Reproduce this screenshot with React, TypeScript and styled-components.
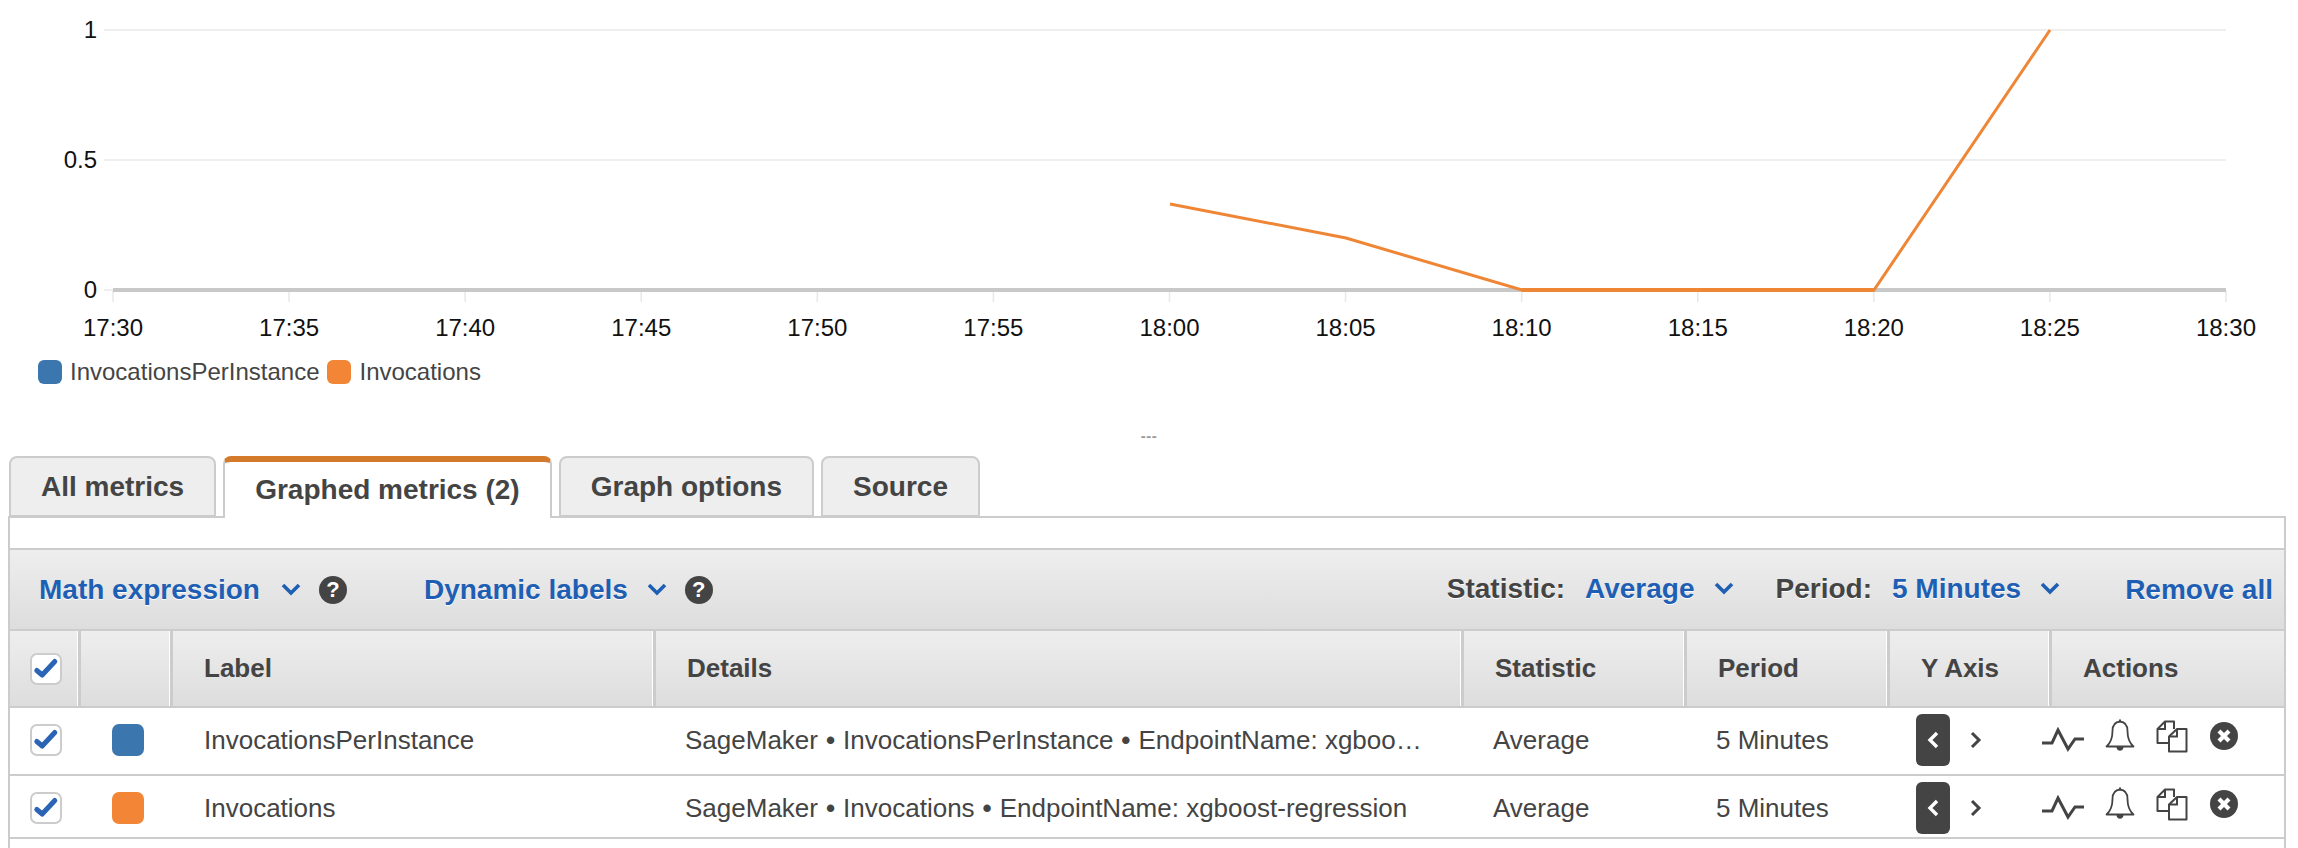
import React from 'react';
import styled, { createGlobalStyle } from 'styled-components';

const GlobalStyle = createGlobalStyle`
  html, body {
    margin: 0;
    padding: 0;
    background: #fff;
  }
  body {
    font-family: "Liberation Sans", Arial, sans-serif;
    color: #444;
    overflow: hidden;
  }
`;

const Page = styled.div`
  width: 2298px;
  height: 848px;
  display: flex;
  flex-direction: column;
  overflow: hidden;
`;

const ChartSvg = styled.svg`
  display: block;
  flex: none;
`;

const AxisLabel = styled.text`
  font-family: "Liberation Sans", Arial, sans-serif;
  font-size: 24px;
  fill: #111;
`;

const Legend = styled.div`
  display: flex;
  align-items: center;
  height: 24px;
  padding-left: 38px;
  margin-top: 10px;
  flex: none;
`;

const LegendItem = styled.div`
  display: flex;
  align-items: center;
  gap: 8px;
  margin-right: 8px;
  font-size: 24px;
  line-height: 24px;
  color: #444;
`;

const LegendSwatch = styled.span<{ $color: string }>`
  width: 24px;
  height: 24px;
  border-radius: 6px;
  background: ${({ $color }) => $color};
`;

const Divider = styled.div`
  height: 72px;
  flex: none;
  display: flex;
  align-items: center;
  justify-content: center;
  font-size: 15px;
  font-weight: 700;
  letter-spacing: 0.5px;
  color: #999;
  padding-top: 30px;
  box-sizing: border-box;
`;

const Tabs = styled.div`
  display: flex;
  gap: 7px;
  height: 62px;
  padding-left: 9px;
  flex: none;
  position: relative;
  z-index: 1;
`;

const Tab = styled.div<{ $active?: boolean }>`
  box-sizing: border-box;
  height: ${({ $active }) => ($active ? '62px' : '61px')};
  padding: 0 30px;
  display: flex;
  align-items: center;
  font-size: 28px;
  font-weight: 700;
  color: #444;
  background: ${({ $active }) => ($active ? '#fff' : '#eee')};
  border: 2px solid #ccc;
  border-top: ${({ $active }) => ($active ? '6px solid #d37a2b' : '2px solid #ccc')};
  border-bottom: ${({ $active }) => ($active ? 'none' : '2px solid #ccc')};
  border-radius: 8px 8px 0 0;
`;

const Panel = styled.div`
  flex: 1;
  margin: -2px 12px 0 8px;
  border: 2px solid #ccc;
  border-bottom: none;
  display: flex;
  flex-direction: column;
`;

const TopStrip = styled.div`
  height: 30px;
  flex: none;
`;

const Toolbar = styled.div`
  height: 79px;
  flex: none;
  display: flex;
  align-items: center;
  padding: 0 11px 0 29px;
  background: linear-gradient(#eee, #ddd);
  border-top: 2px solid #ccc;
  border-bottom: 2px solid #ccc;
  font-size: 28px;
  font-weight: 700;
  text-shadow: 0 1px 0 #fff;
`;

const MenuLink = styled.span`
  color: #1f5fb3;
`;

const ToolbarLabel = styled.span`
  color: #444;
`;

const Chevron = styled.svg<{ $gap?: number }>`
  margin-left: ${({ $gap }) => $gap ?? 19}px;
  flex: none;
`;

const HelpIcon = styled.span`
  width: 28px;
  height: 28px;
  margin-left: 18px;
  border-radius: 50%;
  background: #444;
  color: #fff;
  font-size: 22px;
  line-height: 28px;
  text-align: center;
  text-shadow: none;
  flex: none;
`;

const LeftGroup = styled.div`
  display: flex;
  align-items: center;
  margin-right: 77px;
`;

const RightGroup = styled.div<{ $gap: number }>`
  display: flex;
  align-items: center;
  margin-right: ${({ $gap }) => $gap}px;
  transform: translateY(-1px);
`;

const Spacer = styled.div`
  flex: 1;
`;

const columns = '71px 92px 483px 808px 223px 203px 162px 230px';

const HeaderRow = styled.div`
  display: grid;
  grid-template-columns: ${columns};
  height: 75px;
  flex: none;
  background: linear-gradient(#eee, #ddd);
  border-bottom: 2px solid #ccc;
`;

const HeaderCell = styled.div<{ $plain?: boolean }>`
  box-sizing: border-box;
  display: flex;
  align-items: center;
  padding-left: ${({ $plain }) => ($plain ? 20 : 31)}px;
  border-right: 3px solid #ccc;
  box-shadow: inset -1px 0 0 #fff;
  font-size: 26px;
  font-weight: 700;
  color: #444;
  &:last-child {
    border-right: none;
    box-shadow: none;
  }
`;

const Row = styled.div<{ $height: number }>`
  display: grid;
  grid-template-columns: ${columns};
  height: ${({ $height }) => $height}px;
  flex: none;
  border-bottom: 2px solid #ccc;
  font-size: 26px;
  color: #444;
`;

const Cell = styled.div`
  box-sizing: border-box;
  padding: 16px 30px 0 29px;
  line-height: 32px;
  white-space: nowrap;
  overflow: hidden;
  text-overflow: ellipsis;
`;

const CheckCell = styled.div`
  padding: 16px 0 0 20px;
`;

const SwatchCell = styled.div`
  padding: 16px 0 0 31px;
`;

const Swatch = styled.div<{ $color: string }>`
  width: 32px;
  height: 32px;
  border-radius: 7px;
  background: ${({ $color }) => $color};
`;

const Box = styled.div`
  box-sizing: border-box;
  width: 32px;
  height: 32px;
  background: #fff;
  border: 2px solid #ccc;
  border-radius: 7px;
  display: flex;
  align-items: center;
  justify-content: center;
`;

const Bullet = styled.span`
  font-weight: 700;
  margin: 0 8px;
`;

const AxisCell = styled.div`
  display: flex;
  align-items: flex-start;
  padding: 6px 0 0 26px;
`;

const AxisActive = styled.div`
  width: 34px;
  height: 52px;
  border-radius: 6px;
  background: #444;
  display: flex;
  align-items: center;
  justify-content: center;
`;

const AxisOther = styled.div`
  width: 40px;
  height: 52px;
  margin-left: 6px;
  display: flex;
  align-items: center;
  justify-content: center;
`;

const ActionCell = styled.div`
  display: flex;
  align-items: flex-start;
  margin-left: -10px;
  padding-top: 19px;
`;

const ActionIcon = styled.svg<{ $left: number }>`
  display: block;
  flex: none;
  margin-left: ${({ $left }) => $left}px;
`;

const ticks = ['17:30', '17:35', '17:40', '17:45', '17:50', '17:55', '18:00', '18:05', '18:10', '18:15', '18:20', '18:25', '18:30'];
const tickX = (i: number) => 113 + i * 176.08;

const Chart = () => (
  <ChartSvg width={2298} height={350}>
    {[30, 160].map((y) => (
      <line key={y} x1={104} x2={2226} y1={y} y2={y} stroke="#eee" strokeWidth={2} />
    ))}
    <line x1={104} x2={113} y1={290} y2={290} stroke="#eee" strokeWidth={2} />
    {ticks.map((t, i) => (
      <line key={t} x1={tickX(i)} x2={tickX(i)} y1={290} y2={302} stroke="#e8e8e8" strokeWidth={1.5} />
    ))}
    <line x1={113} x2={2226} y1={290} y2={290} stroke="#c8c8c8" strokeWidth={4} />
    <polyline
      points="1170,204 1346,238 1522,290 1874,290 2050,30"
      fill="none"
      stroke="#ee8636"
      strokeWidth={3}
    />
    <line x1={1522} x2={1874} y1={290} y2={290} stroke="#ee8636" strokeWidth={4} />
    <AxisLabel x={97} y={38} textAnchor="end">1</AxisLabel>
    <AxisLabel x={97} y={168} textAnchor="end">0.5</AxisLabel>
    <AxisLabel x={97} y={298} textAnchor="end">0</AxisLabel>
    {ticks.map((t, i) => (
      <AxisLabel key={t} x={tickX(i)} y={336} textAnchor="middle">{t}</AxisLabel>
    ))}
  </ChartSvg>
);

const Check = () => (
  <svg width="28" height="28" viewBox="0 0 28 28">
    <path d="M4.8 15.5 L10.2 20 L22.8 6.5" fill="none" stroke="#2b63b5" strokeWidth="5" strokeLinejoin="round" strokeLinecap="round" />
  </svg>
);

const Down = ({ gap }: { gap?: number }) => (
  <Chevron $gap={gap} width="20" height="13" viewBox="0 0 20 13">
    <path d="M2 2 L10 10 L18 2" fill="none" stroke="#1f5fb3" strokeWidth="3.6" />
  </Chevron>
);

const Pulse = () => (
  <ActionIcon $left={0} width="42" height="26" viewBox="0 0 42 26">
    <path d="M0 16 H10 L16 3 L26 22 L33 12 H42" fill="none" stroke="#444" strokeWidth="3" />
  </ActionIcon>
);

const Bell = () => (
  <ActionIcon $left={21} width="30" height="34" viewBox="0 0 30 34" style={{ marginTop: -8 }}>
    <path
      d="M15 2.5 C9.5 3 7.5 7 7.5 12 C7.5 20 5 24.5 1.5 27.5 H28.5 C25 24.5 22.5 20 22.5 12 C22.5 7 20.5 3 15 2.5 Z"
      fill="none"
      stroke="#444"
      strokeWidth="1.8"
      strokeLinejoin="round"
    />
    <path d="M15 0.5 V3" stroke="#444" strokeWidth="2" />
    <path d="M11.5 28 C11.5 33 18.5 33 18.5 28 Z" fill="#444" />
  </ActionIcon>
);

const Copy = () => (
  <ActionIcon $left={21} width="32" height="33" viewBox="0 0 32 33" style={{ marginTop: -7 }}>
    <path d="M13 23 H1.5 V9 L9 1.5 H18 V9" fill="none" stroke="#444" strokeWidth="2" strokeLinejoin="round" />
    <path d="M9 1.5 V9 H1.5" fill="none" stroke="#444" strokeWidth="2" />
    <path d="M13 16.5 L21 9 H30.5 V31.5 H13 Z" fill="#fff" stroke="#444" strokeWidth="2" strokeLinejoin="round" />
    <path d="M21 9 V16.5 H13" fill="none" stroke="#444" strokeWidth="2" />
  </ActionIcon>
);

const Close = () => (
  <ActionIcon $left={22} width="28" height="28" viewBox="0 0 28 28" style={{ marginTop: -5 }}>
    <circle cx="14" cy="14" r="14" fill="#444" />
    <path d="M9 9 L19 19 M19 9 L9 19" stroke="#fff" strokeWidth="4.2" />
  </ActionIcon>
);

const metrics = [
  {
    color: '#3b76ae',
    label: 'InvocationsPerInstance',
    name: 'InvocationsPerInstance',
    height: 66,
  },
  {
    color: '#f28636',
    label: 'Invocations',
    name: 'Invocations',
    height: 61,
  },
];

const App = () => (
  <Page>
    <GlobalStyle />
    <Chart />
    <Legend>
      <LegendItem>
        <LegendSwatch $color="#3b76ae" />
        InvocationsPerInstance
      </LegendItem>
      <LegendItem>
        <LegendSwatch $color="#f28636" />
        Invocations
      </LegendItem>
    </Legend>
    <Divider>---</Divider>
    <Tabs>
      <Tab>All metrics</Tab>
      <Tab $active>Graphed metrics (2)</Tab>
      <Tab>Graph options</Tab>
      <Tab>Source</Tab>
    </Tabs>
    <Panel>
      <TopStrip />
      <Toolbar>
        <LeftGroup>
          <MenuLink>Math expression</MenuLink>
          <Down gap={21} />
          <HelpIcon>?</HelpIcon>
        </LeftGroup>
        <LeftGroup>
          <MenuLink>Dynamic labels</MenuLink>
          <Down />
          <HelpIcon>?</HelpIcon>
        </LeftGroup>
        <Spacer />
        <RightGroup $gap={42}>
          <ToolbarLabel>Statistic:</ToolbarLabel>
          <MenuLink style={{ marginLeft: 20 }}>Average</MenuLink>
          <Down />
        </RightGroup>
        <RightGroup $gap={65}>
          <ToolbarLabel>Period:</ToolbarLabel>
          <MenuLink style={{ marginLeft: 20 }}>5 Minutes</MenuLink>
          <Down />
        </RightGroup>
        <MenuLink>Remove all</MenuLink>
      </Toolbar>
      <HeaderRow>
        <HeaderCell $plain>
          <Box>
            <Check />
          </Box>
        </HeaderCell>
        <HeaderCell />
        <HeaderCell>Label</HeaderCell>
        <HeaderCell>Details</HeaderCell>
        <HeaderCell>Statistic</HeaderCell>
        <HeaderCell>Period</HeaderCell>
        <HeaderCell>Y Axis</HeaderCell>
        <HeaderCell>Actions</HeaderCell>
      </HeaderRow>
      {metrics.map((m) => (
        <Row key={m.name} $height={m.height}>
          <CheckCell>
            <Box>
              <Check />
            </Box>
          </CheckCell>
          <SwatchCell>
            <Swatch $color={m.color} />
          </SwatchCell>
          <Cell style={{ paddingLeft: 31 }}>{m.label}</Cell>
          <Cell>
            SageMaker<Bullet>•</Bullet>
            {m.name}
            <Bullet>•</Bullet>EndpointName: xgboost-regression
          </Cell>
          <Cell>Average</Cell>
          <Cell>5 Minutes</Cell>
          <AxisCell>
            <AxisActive>
              <svg width="12" height="18" viewBox="0 0 12 18">
                <path d="M10 2 L3 9 L10 16" fill="none" stroke="#fff" strokeWidth="3.4" />
              </svg>
            </AxisActive>
            <AxisOther>
              <svg width="12" height="18" viewBox="0 0 12 18">
                <path d="M2 2 L9 9 L2 16" fill="none" stroke="#444" strokeWidth="3" />
              </svg>
            </AxisOther>
          </AxisCell>
          <ActionCell>
            <Pulse />
            <Bell />
            <Copy />
            <Close />
          </ActionCell>
        </Row>
      ))}
    </Panel>
  </Page>
);

export default App;
